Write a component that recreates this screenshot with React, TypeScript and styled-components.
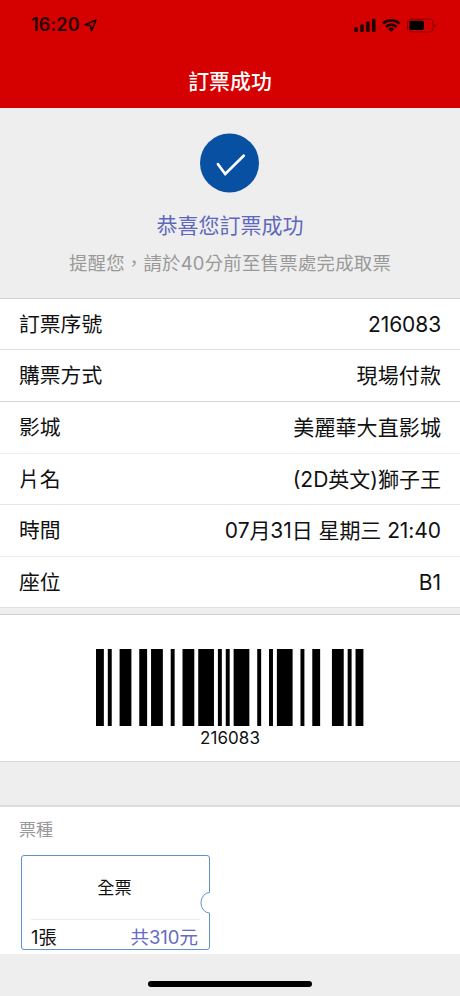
import React from 'react';
import styled, { createGlobalStyle } from 'styled-components';

const GlobalStyle = createGlobalStyle`
  * { box-sizing: border-box; }
  body {
    margin: 0;
    background: #eeeeee;
    font-family: Inter, "Noto Sans CJK TC", sans-serif;
    color: #111;
  }
`;

const BODY_WEIGHT = 370;

const Screen = styled.main`
  width: 460px;
  height: 996px;
  display: flex;
  flex-direction: column;
  background: #eeeeee;
  overflow: hidden;
`;

const Header = styled.header`
  height: 108px;
  flex: none;
  background: #d50000;
  display: flex;
  flex-direction: column;
`;

const StatusBar = styled.div`
  height: 50px;
  padding: 0 24px 0 31px;
  display: flex;
  align-items: center;
  justify-content: space-between;
  color: #260000;
`;

const Clock = styled.div`
  display: flex;
  align-items: center;
  gap: 4px;
  font-size: 18px;
  font-weight: 600;
  line-height: 22px;
  letter-spacing: 0.15px;
`;

const StatusIcons = styled.svg`
  display: block;
`;

const Title = styled.h1`
  margin: 0;
  height: 58px;
  padding-top: 16px;
  text-align: center;
  font-size: 20.9px;
  line-height: 32px;
  font-weight: 500;
  color: #fff;
`;

const Hero = styled.section`
  height: 190px;
  flex: none;
  display: flex;
  flex-direction: column;
  align-items: center;
  padding-top: 25px;
`;

const Congrats = styled.div`
  margin-top: 18px;
  font-size: 21px;
  line-height: 30px;
  color: #5f68bd;
  font-weight: ${BODY_WEIGHT};
`;

const Reminder = styled.div`
  margin-top: 9px;
  font-size: 18.4px;
  line-height: 26px;
  letter-spacing: 0.25px;
  color: #999;
  font-weight: ${BODY_WEIGHT};
  white-space: nowrap;
`;

const Details = styled.dl`
  margin: 0;
  flex: none;
  background: #fff;
  border-top: 1px solid #d2d2d2;
`;

const Row = styled.div<{ $line: string; $h: number }>`
  height: ${p => p.$h}px;
  padding: 1px 19px 0;
  display: flex;
  align-items: center;
  justify-content: space-between;
  border-bottom: 1px solid ${p => p.$line};
  font-size: 20.8px;
  line-height: 30px;
  font-weight: ${BODY_WEIGHT};
`;

const Term = styled.dt`
  margin: 0;
`;

const Value = styled.dd<{ $tracking: number }>`
  margin: 0;
  white-space: pre;
  font-size: 21px;
  letter-spacing: ${p => p.$tracking}px;
`;

const BarcodePanel = styled.section`
  height: 148px;
  flex: none;
  margin-top: 6px;
  padding-top: 34px;
  background: #fff;
  border-top: 1px solid #cfcfcf;
  border-bottom: 1px solid #d6d6d6;
  display: flex;
  flex-direction: column;
  align-items: center;
`;

const BarcodeNumber = styled.div`
  margin-top: 1px;
  font-size: 17px;
  line-height: 22px;
  letter-spacing: 0.05px;
`;

const Tickets = styled.section`
  height: 149px;
  flex: none;
  margin-top: 43px;
  padding: 10px 20px 0 19px;
  background: #fff;
  border-top: 2px solid #dddddd;
`;

const TicketsLabel = styled.h2`
  margin: 0;
  font-size: 17px;
  line-height: 26px;
  font-weight: ${BODY_WEIGHT};
  color: #999;
`;

const Ticket = styled.article`
  position: relative;
  width: 189px;
  height: 95px;
  margin: 12px 0 0 2px;
  padding: 0 9px;
  border: 1px solid #5e92cc;
  border-radius: 3px;
`;

const TicketName = styled.div`
  height: 64px;
  display: flex;
  align-items: center;
  justify-content: center;
  padding: 1px 2px 0 0;
  border-bottom: 1px solid #ececec;
  font-size: 17.2px;
  line-height: 24px;
  font-weight: 400;
`;

const TicketFooter = styled.div`
  height: 30px;
  display: flex;
  align-items: center;
  justify-content: space-between;
  padding: 3px 2px 0 0;
  font-size: 18.2px;
  line-height: 26px;
`;

const Price = styled.span`
  color: #656bc4;
  font-size: 18.5px;
  font-weight: ${BODY_WEIGHT};
`;

const Notch = styled.svg`
  position: absolute;
  right: -2px;
  top: 35px;
`;

const HomeArea = styled.footer`
  height: 42px;
  flex: none;
  display: flex;
  justify-content: center;
  align-items: flex-start;
  padding-top: 27px;
`;

const HomeIndicator = styled.div`
  width: 164px;
  height: 6px;
  border-radius: 3px;
  background: #000;
`;

const rows = [
  { term: '訂票序號', value: '216083', line: '#dcdcdc', h: 51, tracking: -0.1 },
  { term: '購票方式', value: '現場付款', line: '#d6d6d6', h: 52, tracking: 0.1 },
  { term: '影城', value: '美麗華大直影城', line: '#ececec', h: 52, tracking: 0.1 },
  { term: '片名', value: '(2D英文)獅子王', line: '#e6e6e6', h: 51, tracking: 0 },
  { term: '時間', value: '07月31日 星期三 21:40', line: '#ececec', h: 52, tracking: -0.07 },
  { term: '座位', value: 'B1', line: '#dedede', h: 51, tracking: 0 },
];

// Code 128C: start, 21, 60, 83, checksum, stop.
const CODE = '211232' + '213212' + '314111' + '114212' + '114212' + '2331112';

function Barcode() {
  const bars: React.ReactElement[] = [];
  let x = 0;
  CODE.split('').forEach((c, i) => {
    const w = Number(c);
    if (i % 2 === 0) bars.push(<rect key={i} x={x} y={0} width={w} height={77} />);
    x += w;
  });
  return (
    <svg width="267.4" height="77" viewBox="0 0 68 77" preserveAspectRatio="none" aria-label="216083">
      {bars}
    </svg>
  );
}

export default function App() {
  return (
    <>
      <GlobalStyle />
      <Screen>
        <Header>
          <StatusBar>
            <Clock>
              16:20
              <svg width="13" height="13" viewBox="0 0 13 13" fill="none" stroke="currentColor" strokeWidth="1.7" strokeLinejoin="round">
                <path d="M12 1 1.2 5.7 6.4 6.6 7.6 11.8Z" />
              </svg>
            </Clock>
            <StatusIcons width="82" height="15" viewBox="354 17.5 82 15">
              <g fill="#180000">
                <rect x="354.4" y="26.8" width="3.5" height="4.7" rx="1" />
                <rect x="360.2" y="24" width="3.5" height="7.5" rx="1" />
                <rect x="366.1" y="21" width="3.5" height="10.5" rx="1" />
                <rect x="372" y="18.2" width="3.5" height="13.3" rx="1" />
              </g>
              <g fill="none" stroke="#180000" strokeWidth="2.5">
                <path d="M383 23.2a11.7 11.7 0 0 1 16.4 0" />
                <path d="M386 26.5a7.4 7.4 0 0 1 10.4 0" />
              </g>
              <path d="M388.3 28.4a4.2 4.2 0 0 1 5.8 0L391.2 31.4Z" fill="#180000" />
              <rect x="407.5" y="18.6" width="25.5" height="12.8" rx="3.4" fill="none" stroke="#8a0000" />
              <rect x="409.3" y="20.3" width="14.6" height="9.3" rx="1.8" fill="#000" />
              <path d="M434.3 23v4.2q1.5-.7 1.5-2.1t-1.5-2.1Z" fill="#8a0000" />
            </StatusIcons>
          </StatusBar>
          <Title>訂票成功</Title>
        </Header>

        <Hero>
          <svg width="60" height="60" viewBox="0 0 60 60">
            <circle cx="29.5" cy="30" r="29.5" fill="#0850a2" />
            <path d="M18 31.2 25.2 41 43.7 22.8" fill="none" stroke="#fff" strokeWidth="2.7" strokeLinecap="round" />
          </svg>
          <Congrats>恭喜您訂票成功</Congrats>
          <Reminder>提醒您，請於40分前至售票處完成取票</Reminder>
        </Hero>

        <Details>
          {rows.map(r => (
            <Row key={r.term} $line={r.line} $h={r.h}>
              <Term>{r.term}</Term>
              <Value $tracking={r.tracking}>{r.value}</Value>
            </Row>
          ))}
        </Details>

        <BarcodePanel>
          <Barcode />
          <BarcodeNumber>216083</BarcodeNumber>
        </BarcodePanel>

        <Tickets>
          <TicketsLabel>票種</TicketsLabel>
          <Ticket>
            <TicketName>全票</TicketName>
            <TicketFooter>
              <span>1張</span>
              <Price>共310元</Price>
            </TicketFooter>
            <Notch width="11" height="24" viewBox="0 0 11 24">
              <rect x="8" y="1.5" width="3" height="20.5" fill="#fff" />
              <path d="M9.6 1.5A8.6 10.2 0 0 0 9.6 22" fill="none" stroke="#5e92cc" />
            </Notch>
          </Ticket>
        </Tickets>

        <HomeArea>
          <HomeIndicator />
        </HomeArea>
      </Screen>
    </>
  );
}
